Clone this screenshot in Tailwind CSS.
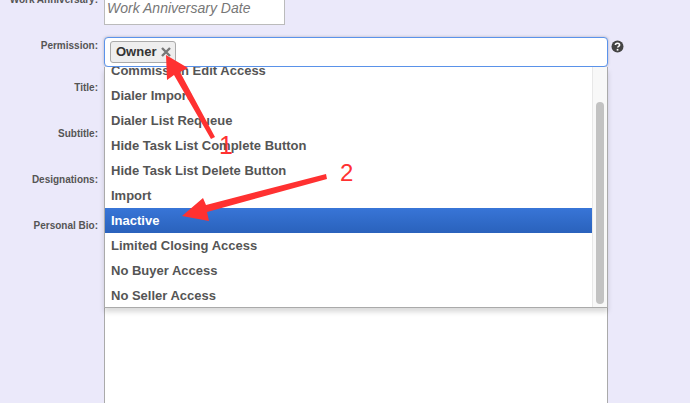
<!DOCTYPE html>
<html lang="en">
<head>
    <meta charset="UTF-8">
    <meta name="viewport" content="width=device-width, initial-scale=1.0">
    <title>Permission</title>
    <script src="https://cdn.jsdelivr.net/npm/@tailwindcss/browser@4"></script>
</head>
<body class="bg-[#ebe9fa] font-['Liberation_Sans',Arial,sans-serif] overflow-hidden">
    <div class="relative w-[690px] h-[403px] overflow-hidden">
        <!-- Form rows -->
        <div class="flex flex-col -mt-[22px] pr-[82px]">
            <div class="flex gap-[6px] h-[59px]">
                <label class="w-[98px] shrink-0 text-right text-[10px] leading-[13px] font-bold text-[#555] mt-[15px]">Work Anniversary:</label>
                <div class="w-[181px] h-[47px] bg-white border border-[#bbb] flex items-end pl-[2px] pb-[7px] text-[14px] leading-[18px] italic text-[#777]">Work Anniversary Date</div>
            </div>

            <div class="flex gap-[6px] h-[44px] -mr-[16px]">
                <label class="w-[98px] shrink-0 text-right text-[10px] leading-[13px] font-bold text-[#555] mt-[2px]">Permission:</label>
                <div class="relative flex-1 h-[30px] z-10">
                    <div class="flex items-start h-full bg-white border border-[#5b93ea] rounded-[4px] shadow-[0_0_3px_rgba(0,0,0,0.25)] pl-[5px] pt-[3px]">
                        <span class="inline-flex items-center gap-[5px] h-[22px] pl-[5px] pr-[4px] bg-[#eeeeee] border border-[#aaa] rounded-[3px] text-[13px] font-bold text-[#333]">
                            Owner
                            <svg width="10" height="10" viewBox="0 0 10 10" class="text-[#777]"><path d="M1 1l8 8M9 1l-8 8" stroke="currentColor" stroke-width="2.4" fill="none"/></svg>
                        </span>
                    </div>
                    <!-- Dropdown list -->
                    <div class="absolute left-0 right-0 top-[30px] h-[241px] bg-white border border-t-0 border-[#aaa] shadow-[0_4px_5px_rgba(0,0,0,0.15)] overflow-hidden flex">
                        <ul class="flex-1 -mt-[9px] text-[13px] font-bold text-[#555]">
                            <li class="h-[25px] pl-[6px] leading-[25px]">Commission Edit Access</li>
                            <li class="h-[25px] pl-[6px] leading-[25px]">Dialer Import</li>
                            <li class="h-[25px] pl-[6px] leading-[25px]">Dialer List Requeue</li>
                            <li class="h-[25px] pl-[6px] leading-[25px]">Hide Task List Complete Button</li>
                            <li class="h-[25px] pl-[6px] leading-[25px]">Hide Task List Delete Button</li>
                            <li class="h-[25px] pl-[6px] leading-[25px]">Import</li>
                            <li class="h-[25px] pl-[6px] leading-[25px] text-white bg-linear-to-b from-[#3875d7] to-[#2a62bc]">Inactive</li>
                            <li class="h-[25px] pl-[6px] leading-[25px]">Limited Closing Access</li>
                            <li class="h-[25px] pl-[6px] leading-[25px]">No Buyer Access</li>
                            <li class="h-[25px] pl-[6px] leading-[25px]">No Seller Access</li>
                        </ul>
                        <div class="w-[15px] shrink-0 bg-[#f8f8f8] border-l border-[#e8e8e8] pt-[35px] pb-[3px] flex justify-center">
                            <div class="w-[8px] h-full bg-[#c2c2c2] rounded-[4px]"></div>
                        </div>
                    </div>
                </div>
                <svg width="13" height="13" viewBox="0 0 13 13" class="ml-[-3px] mt-[3px]">
                    <circle cx="6.5" cy="6.5" r="6" fill="#444"/>
                    <path d="M4.4 5.1c0-1.3 1-1.9 2.1-1.9s2.1.6 2.1 1.7c0 1.4-1.9 1.4-1.9 2.7" stroke="#fff" stroke-width="1.6" fill="none"/>
                    <rect x="5.7" y="8.9" width="1.7" height="1.7" fill="#fff"/>
                </svg>
            </div>

            <div class="flex gap-[6px] h-[46px]">
                <label class="w-[98px] shrink-0 text-right text-[10px] leading-[13px] font-bold text-[#555]">Title:</label>
            </div>
            <div class="flex gap-[6px] h-[46px]">
                <label class="w-[98px] shrink-0 text-right text-[10px] leading-[13px] font-bold text-[#555]">Subtitle:</label>
            </div>
            <div class="flex gap-[6px] h-[46px]">
                <label class="w-[98px] shrink-0 text-right text-[10px] leading-[13px] font-bold text-[#555]">Designations:</label>
            </div>
            <div class="flex gap-[6px] h-[190px]">
                <label class="w-[98px] shrink-0 text-right text-[10px] leading-[13px] font-bold text-[#555]">Personal Bio:</label>
                <div class="flex-1 h-full bg-white border-x border-[#aaa]"></div>
            </div>
        </div>

        <!-- Annotation arrows -->
        <svg class="absolute inset-0 z-20" width="690" height="403" viewBox="0 0 690 403">
            <polygon points="166,55 188,68 180,72 215,137 211,139 174,75 167,80" fill="#ff3131"/>
            <polygon points="182,216 203,198 206,205 326,174 327,179 207,212 209,221" fill="#ff3131"/>
        </svg>
        <span class="absolute z-20 left-[219px] top-[131px] text-[25px] leading-[28px] font-light text-[#ff3131]">1</span>
        <span class="absolute z-20 left-[340px] top-[159px] text-[24px] leading-[28px] text-[#ff3131]">2</span>
    </div>
</body>
</html>
